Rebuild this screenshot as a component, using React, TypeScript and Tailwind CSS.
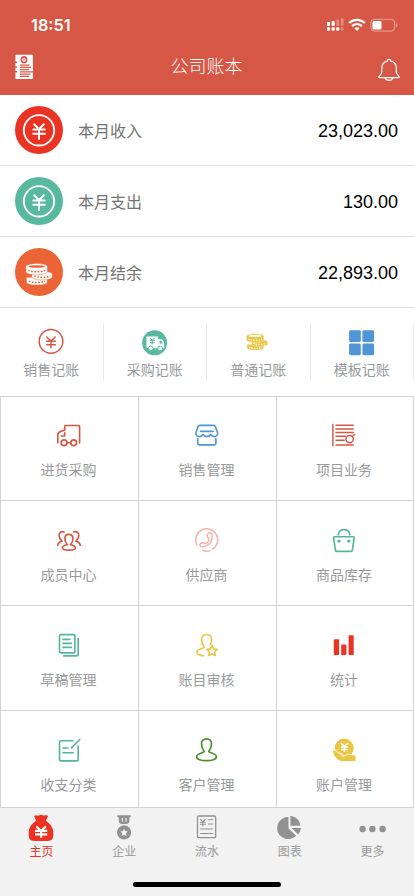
import type { ReactNode } from 'react';

const RED = '#d65745';
const GREEN = '#52b89a';
const GOLD = '#eac645';

function Stroke({ color, width = 1.65, children }: { color: string; width?: number; children: ReactNode }) {
  return (
    <svg width="28" height="28" viewBox="0 0 28 28" fill="none" stroke={color} strokeWidth={width} strokeLinecap="round" strokeLinejoin="round">
      {children}
    </svg>
  );
}

function CoinStack({ line, gap }: { line: string; gap: string }) {
  return (
    <>
      <g fill={line} stroke={gap} strokeWidth="0.5">
        <path d="M1.5 16v5.2c0 1.8 4.8 3.1 10.6 3.1s10.6-1.3 10.6-3.1V16z" />
        <path d="M7 10.5v5.3c0 1.8 4.7 3.1 10.4 3.1s10.4-1.3 10.4-3.1v-3c0-1.4-2-2.300-5-2.300z" />
        <path d="M.9 5v5.3c0 1.8 4.9 3.2 11 3.2s11-1.4 11-3.2V5c0-2-4.9-3.4-11-3.4S.9 3 .9 5z" />
      </g>
      <ellipse cx="11.9" cy="4.7" rx="8.4" ry="1.4" fill={gap} />
      <g fill="none" stroke={gap} strokeWidth="1.5" strokeDasharray="1.8 1.4">
        <path d="M3.3 8.700c4 2.200 13 2.200 17.400.1" />
        <path d="M9.500 14.700c4 2 12 2 16.200-.1" />
        <path d="M4 20.100c4 2 12 2 16.400 0" />
      </g>
    </>
  );
}

function YenBadge({ bg }: { bg: string }) {
  return (
    <svg width="48" height="48" viewBox="0 0 48 48" fill="none" stroke="#fff" strokeLinecap="round" strokeLinejoin="round">
      <circle cx="24" cy="24" r="24" fill={bg} stroke="none" />
      <circle cx="24" cy="24.3" r="15.2" strokeWidth="1.9" />
      <path d="M19.200 18.200l4.800 5 4.800-5M18.300 23.500h11.500M18.300 27.700h11.500M24 23.500V33" strokeWidth="2" />
    </svg>
  );
}

function CoinBadge() {
  return (
    <svg width="48" height="48" viewBox="0 0 48 48">
      <circle cx="24" cy="24" r="24" fill="#eb6437" />
      <g transform="translate(10 14) scale(.98 .95)"><CoinStack line="#fff" gap="#eb6437" /></g>
    </svg>
  );
}

const summary = [
  { label: '本月收入', value: '23,023.00', icon: <YenBadge bg="#eb3323" /> },
  { label: '本月支出', value: '130.00', icon: <YenBadge bg="#58b99d" /> },
  { label: '本月结余', value: '22,893.00', icon: <CoinBadge /> },
];

const quick = [
  {
    label: '销售记账',
    icon: (
      <Stroke color={RED} width={1.5}>
        <circle cx="14" cy="13.4" r="11.8" />
        <path d="M9.8 9l4.2 4.100 4.200-4.100M9.600 13.300h8.800M9.600 16.700h8.800M14 13.300v6.500" />
      </Stroke>
    ),
  },
  {
    label: '采购记账',
    icon: (
      <svg width="28" height="28" viewBox="0 0 28 28">
        <circle cx="13.6" cy="14.8" r="12.5" fill="#58b99d" />
        <path d="M5.500 8.500h11.600v2.800h3.100c1.600 0 3 3 3 4.300v4.600H6.800c-1 0-1.400-.6-1.400-1.400z" fill="#fff" />
        <path d="M18.600 12.700h1.400c.8 0 1.600 1.800 1.600 2.700h-3z" fill="#58b99d" />
        <path d="M8.900 9.900l2.400 2.500 2.400-2.500M8.800 12.700h5M8.800 14.700h5M11.300 12.500v4" stroke="#58b99d" fill="none" />
        <g fill="#fff" stroke="#58b99d" strokeWidth="1"><circle cx="9.800" cy="20.400" r="2.300" /><circle cx="19.100" cy="20.400" r="2.300" /></g>
      </svg>
    ),
  },
  {
    label: '普通记账',
    icon: (
      <svg width="28" height="28" viewBox="0 0 28 28">
        <g transform="translate(1.800 4.700) scale(.79 .72)"><CoinStack line={GOLD} gap="#fff" /></g>
      </svg>
    ),
  },
  {
    label: '模板记账',
    icon: (
      <svg width="28" height="28" viewBox="0 0 28 28" fill="#5096d6">
        <rect x="1.100" y="2.200" width="11.700" height="11.700" rx="1.400" />
        <rect x="14.400" y="2.200" width="11.700" height="11.700" rx="1.400" />
        <rect x="1.100" y="15.500" width="11.700" height="11.700" rx="1.400" />
        <rect x="14.400" y="15.500" width="11.700" height="11.700" rx="1.400" />
      </svg>
    ),
  },
];

const modules = [
  {
    label: '进货采购',
    icon: (
      <Stroke color={RED}>
        <path d="M24.600 21.800V5.600c0-.7-.4-1.100-1.100-1.100H10.800c-.7 0-1.100.4-1.100 1.100v3.500L6 10.300c-2 .7-3.200 1.600-3.200 3.600v7.900M9.700 11.700V15H6.300M12 21.700h3.700" />
        <circle cx="9" cy="21.700" r="2.900" />
        <circle cx="18.700" cy="21.700" r="2.900" />
      </Stroke>
    ),
  },
  {
    label: '销售管理',
    icon: (
      <Stroke color="#4f96d8">
        <path d="M7 4.400h13.500c1 0 1.600.3 1.900 1.200l2.200 6.200c.3 2-1.200 3.800-3.400 3.800-1.700 0-2.800-.7-3.600-2.200-.8 1.500-2 2.200-3.800 2.200s-3-.7-3.800-2.200c-.8 1.500-2 2.200-3.700 2.200-2.200 0-3.700-1.800-3.400-3.800l2.100-6.200c.4-.9 1-1.200 2-1.200zM7.500 10.300h12.600M4.700 17.700v4.800c0 .9.4 1.300 1.300 1.300h15.600c.9 0 1.300-.4 1.300-1.300v-4.800" />
      </Stroke>
    ),
  },
  {
    label: '项目业务',
    icon: (
      <Stroke color={RED} width={1.450}>
        <path d="M2.900 3.500v21.300M6 4.300h17.200M6 8h17.200M6 11.500h17.200M6 15.200h9.400M6 19.200h8.100M6 24h17.200M22.300 15.500l2.500-2.200" />
        <circle cx="19.600" cy="18.100" r="3.700" />
      </Stroke>
    ),
  },
  {
    label: '成员中心',
    icon: (
      <Stroke color={RED}>
        <path d="M13.900 8.400c-2.600 0-4 1.800-4 4.200 0 2.300.6 4.400 2.300 6.100-2.400.4-4.800 1.300-4.800 3 0 1.600 3 2.400 6.500 2.400s6.500-.8 6.500-2.400c0-1.700-2.400-2.600-4.800-3 1.700-1.700 2.300-3.800 2.300-6.100 0-2.400-1.400-4.200-4-4.200z" />
        <path d="M9.100 6C6.300 4.800 4 6.600 4.100 9.600c.1 2.500 1.200 4.200 2.900 5.500-2.600.8-4 2-4.300 4.200M18.800 6c2.800-1.200 5.100.6 5 3.600-.1 2.500-1.200 4.200-2.900 5.500 2.600.8 4 2 4.300 4.200" />
      </Stroke>
    ),
  },
  {
    label: '供应商',
    icon: (
      <Stroke color="#f0b4aa" width={1.500}>
        <path d="M3.900 18.800A11 11 0 1 1 19.500 23.200M9.800 24.300c2.400 1 5 1.100 7.400.3" />
        <path d="M14.400 8.500c1.800-2.600 4.700-2 4.800 1.100.1 3.700-1.600 7.800-4.800 9.800-2.700 1.700-6.200 1.900-7.200.5-.9-1.200.4-3.200 2.300-3.100 1.400.1 1.900 1.100 3.100.7 1.700-.6 3-2.400 3.300-4.200.2-1.300-.9-1.700-1.500-2.400-.5-.8-.5-1.600 0-2.400z" />
      </Stroke>
    ),
  },
  {
    label: '商品库存',
    icon: (
      <Stroke color={GREEN}>
        <path d="M4.500 10.700h18.700c.7 0 1.100.4 1 1.100l-1.800 12.300c-.1.800-.5 1.200-1.300 1.200H6.700c-.8 0-1.200-.4-1.300-1.200L3.600 11.800c-.1-.7.2-1.100.9-1.100zM8.200 8.800C8.900 5.500 11.100 3.700 14 3.700s5.200 1.800 5.900 5.100" />
        <g fill={GREEN} stroke="none"><circle cx="9" cy="15.100" r="1.700" /><circle cx="18.800" cy="15.100" r="1.700" /></g>
      </Stroke>
    ),
  },
  {
    label: '草稿管理',
    icon: (
      <Stroke color={GREEN}>
        <rect x="4.500" y="3.600" width="15.400" height="18.200" rx="1.400" />
        <path d="M23.200 7.400v15.800c0 1.100-.6 1.700-1.700 1.700H8.800M8 8.400h6.800M8 12.400h8.400M8 16.400h8.400" />
      </Stroke>
    ),
  },
  {
    label: '账目审核',
    icon: (
      <Stroke color={GOLD}>
        <path d="M17.300 13.700c1.100-2 1.500-3.700 1.300-5.700-.3-3-2.100-4.500-5-4.500-3 0-5 1.700-5 4.900 0 2.900.8 5.400 2.700 7.600-.2 1.500-7.200 1.700-7.500 5.100-.2 2.500 3.100 3.600 6.600 3.700" />
        <path d="M19.100 14.700l1.500 3.200 3.600.5-2.600 2.500.6 3.600-3.100-1.700-3.200 1.700.6-3.600-2.600-2.500 3.600-.5z" />
      </Stroke>
    ),
  },
  {
    label: '统计',
    icon: (
      <svg width="28" height="28" viewBox="0 0 28 28" fill="#eb3323">
        <rect x="3.800" y="8.300" width="5.300" height="15.800" rx=".7" />
        <rect x="11.200" y="13.400" width="5.200" height="10.700" rx=".7" />
        <rect x="18.600" y="4.300" width="5.100" height="19.800" rx=".7" />
      </svg>
    ),
  },
  {
    label: '收支分类',
    icon: (
      <Stroke color={GREEN}>
        <path d="M18 4.700H6.200c-1.100 0-1.700.6-1.700 1.700v16.800c0 1.100.6 1.700 1.700 1.700h15.300c1.100 0 1.700-.6 1.700-1.700V10M24.800 3.500l-8.400 8.400M8 12h5.100M8 16.700h10.300" />
      </Stroke>
    ),
  },
  {
    label: '客户管理',
    icon: (
      <Stroke color="#4b8f2e">
        <path d="M13.500 2.800c-3.100 0-5 1.800-5 5 0 3 .8 5.300 2.700 7.600-.2 1.700-7.300 1.700-7.600 5.100-.2 3.100 4.700 4.100 9.900 4.100s10.100-1 9.900-4.100c-.3-3.400-7.400-3.400-7.600-5.100 1.900-2.300 2.700-4.600 2.700-7.600 0-3.200-1.900-5-5-5z" />
      </Stroke>
    ),
  },
  {
    label: '账户管理',
    icon: (
      <svg width="28" height="28" viewBox="0 0 28 28">
        <circle cx="14.200" cy="12.100" r="9.500" fill={GOLD} />
        <path d="M10.900 7l3.500 3.600L17.900 7M11.100 10.900h6.600M11.100 13.500h6.600M14.400 10.500v5.500" stroke="#fff" strokeWidth="1.600" fill="none" />
        <path d="M3.700 13.900c2.100.3 3.600 2.200 5.300 3.200 2.300.2 4.200 1.100 5.100 3.100 1.400-.5 2.500-2.400 4.700-2.100 2.400.7 4.100.9 7.200 1.100v6.400H11.300c-2.600 0-8.700-5.500-8.500-10 0-.8.200-1.800.9-1.700z" fill={GOLD} stroke="#fff" strokeWidth=".9" />
        <path d="M9 17.200c1.300 1.700 2.400 2.900 4.700 3.300" stroke="#fff" strokeWidth=".8" fill="none" />
      </svg>
    ),
  },
];

const tabs = [
  {
    label: '主页',
    icon: (
      <svg width="28" height="28" viewBox="0 0 28 28">
        <path d="M8 1.600c2-.5 3 .3 4.200-.2 1.200-.8 2.500-.8 3.700 0 1.200.4 2.300-.4 4.400.2.7.3.7.9.4 1.500l-1.400 2.700c-.3.6-.2 1 .3 1.400 4.300 3 6.800 7.100 6.800 12.600 0 5.100-1.400 7.200-6 7.200H7.600c-4.600 0-6-2.100-6-7.200C1.600 14.300 4.100 10.200 8.400 7.200c.5-.4.6-.8.3-1.400L7.500 3.100c-.3-.6-.2-1.200.5-1.500z" fill="#eb3323" />
        <path d="M9.400 12.500l4.700 4.500 4.700-4.500M8 16.900h12.200M8 20.400h12.200M14.100 16.500v7.300" fill="none" stroke="#fff" strokeWidth="2.200" />
      </svg>
    ),
  },
  {
    label: '企业',
    icon: (
      <svg width="28" height="28" viewBox="0 0 28 28" fill="#929292">
        <path d="M7.300 1.200h13.500v1.600l-1.400 1v3.400c0 1.900-1.800 2.900-5.400 2.900s-5.200-1-5.200-2.900V3.800l-1.500-1z" />
        <path d="M12.300 4v3.400M16 4v3.400" stroke="#f2f2f2" strokeWidth="1.100" />
        <circle cx="14.100" cy="18.400" r="7.100" />
        <path d="M14.100 14.800l1.100 2.300 2.600.4-1.900 1.800.5 2.600-2.300-1.200-2.300 1.200.5-2.600-1.900-1.800 2.600-.4z" fill="#f2f2f2" />
      </svg>
    ),
  },
  {
    label: '流水',
    icon: (
      <Stroke color="#929292" width={1.300}>
        <rect x="4.500" y="2" width="18.200" height="21.700" rx="1" />
        <path d="M7.600 5.300l2.300 2.600 2.300-2.600M7.400 8.200h5M7.400 10.200h5M9.900 8v4M15.500 5.700h4.200M15.500 10h4.200M7.600 15h12.100M7.600 19.500h12.100" strokeWidth="1.100" />
      </Stroke>
    ),
  },
  {
    label: '图表',
    icon: (
      <svg width="28" height="28" viewBox="0 0 28 28" fill="#929292">
        <path d="M12.500 3.100v11.500l7.600 7.100A11 11 0 1 1 12.500 3.100z" />
        <path d="M14.400 1.900c5.500.4 9.600 4.400 10 9.900h-10zM15.600 14h9.200c-.1 2.500-1 4.800-2.600 6.500z" />
      </svg>
    ),
  },
  {
    label: '更多',
    icon: (
      <svg width="28" height="28" viewBox="0 0 28 28" fill="#929292">
        <circle cx="3.600" cy="15" r="3.200" /><circle cx="13.400" cy="15" r="3.200" /><circle cx="23.600" cy="15" r="3.200" />
      </svg>
    ),
  },
];

function StatusIcons() {
  return (
    <svg width="72" height="16" viewBox="0 0 72 16" fill="#fff">
      <rect x="-.2" y="5" width="3.200" height="4" rx="1" /><rect x="4.600" y="4" width="3.200" height="5" rx="1" />
      <rect x="9.300" y="2.500" width="2.800" height="6.500" rx="1" opacity=".3" /><rect x="13.800" y="1" width="2.800" height="8" rx="1" opacity=".3" />
      <rect x="-.2" y="10.300" width="3.200" height="3.500" rx="1" /><rect x="4.600" y="10.300" width="3.200" height="3.500" rx="1" /><rect x="9.200" y="10.300" width="3.200" height="3.500" rx="1" />
      <rect x="13.800" y="10.300" width="2.800" height="3.500" rx="1" opacity=".3" />
      <g fill="none" stroke="#fff" strokeWidth="2.300"><path d="M22.200 6c4.300-4.300 11.300-4.300 15.600 0M25.200 9.100c2.800-2.600 6.800-2.600 9.600 0" /></g>
      <path d="M27.400 11.200c1.500-1.300 3.700-1.300 5.200 0l-2.600 2.700z" />
      <rect x="43.900" y="2.300" width="23.700" height="11.800" rx="3.300" fill="none" stroke="#fff" strokeOpacity=".45" />
      <rect x="45.500" y="4" width="9" height="8.400" rx="1.500" />
      <path d="M69 6v4.400c1.700-.7 1.700-3.700 0-4.400z" opacity=".5" />
    </svg>
  );
}

function BookIcon() {
  return (
    <svg width="20" height="26" viewBox="0 0 20 26">
      <rect x="1.400" y=".7" width="17.500" height="24.300" rx=".8" fill="#fff" />
      <ellipse cx="10" cy="5.800" rx="2.600" ry="2.900" fill="#fff" stroke={RED} strokeWidth="1.600" />
      <path d="M8.900 4.200l1.100 1.400 1.100-1.400M10 5.600v2" stroke={RED} strokeWidth=".7" fill="none" />
      <path d="M6 11h9.500M6 13.300h11M6 15.600h9M6 17.900h13M6 20.200h10.500M6 22.400h9" stroke={RED} strokeWidth="1.250" />
      <path d="M0 8.300h3M0 13h3M0 17.800h3" stroke={RED} strokeWidth="1.500" />
    </svg>
  );
}

function BellIcon() {
  return (
    <svg width="24" height="24" viewBox="0 0 24 24" fill="none" stroke="#fff" strokeWidth="1.200" strokeLinejoin="round" strokeLinecap="round">
      <path d="M10.300 3.200c0-2.400 3.500-2.400 3.500 0 3.500.8 5.500 3.500 5.500 7v3.600c0 2.300 1 3.100 2.500 4.400.7.700.5 1.400-.4 1.400H2.700c-.9 0-1.100-.7-.4-1.400 1.500-1.300 2.500-2.100 2.500-4.400v-3.600c0-3.500 2-6.200 5.500-7zM8.200 19.800c.8 3.400 6.900 3.400 7.700 0" />
    </svg>
  );
}

export default function App() {
  return (
    <div className="flex h-[896px] w-[414px] flex-col overflow-hidden bg-white font-['Liberation_Sans','Noto_Sans_CJK_SC',sans-serif]">
      <header className="h-[95px] shrink-0 bg-[#d65745] text-white">
        <div className="flex h-[46px] items-start justify-between pt-[17px] pr-[15px] pl-[31px]">
          <span className="font-['Inter',sans-serif] text-[16.300px] leading-[17px] font-semibold">18:51</span>
          <StatusIcons />
        </div>
        <div className="flex h-[42px] items-center justify-between pr-[13px] pl-[14px]">
          <span className="flex w-[22px]"><BookIcon /></span>
          <h1 className="text-[18px] leading-6 font-light">公司账本</h1>
          <span className="pt-[5px]"><BellIcon /></span>
        </div>
      </header>

      <section className="shrink-0">
        {summary.map((row) => (
          <div key={row.label} className="flex h-[71px] items-center border-b border-[#dedede] pr-4 pl-[15px]">
            {row.icon}
            <span className="ml-[15px] pt-1 text-base text-[#747474]">{row.label}</span>
            <span className="ml-auto pt-[3px] text-[18px] text-black">{row.value}</span>
          </div>
        ))}
      </section>

      <section className="flex h-[88px] shrink-0 py-[15px]">
        {quick.map((item) => (
          <div key={item.label} className="flex h-[58px] w-[103.500px] flex-col items-center border-r border-[#e9e9e9] pt-[5px]">
            {item.icon}
            <span className="mt-[4px] text-sm leading-5 text-[#999a9e]">{item.label}</span>
          </div>
        ))}
      </section>

      <section className="grid h-[412px] shrink-0 grid-cols-[138px_138px_137px] grid-rows-[104px_105px_105px_97px] overflow-hidden border-t border-l border-[#d2d2d6]">
        {modules.map((item, i) => (
          <div key={item.label} className={`flex flex-col items-center border-r border-b border-[#d2d2d6] pr-0.5 ${i < 3 ? 'pt-6' : 'pt-[25px]'}`}>
            {item.icon}
            <span className="mt-[11px] text-sm leading-5 text-[#999a9e]">{item.label}</span>
          </div>
        ))}
      </section>

      <nav className="flex grow flex-col items-center bg-[#f2f2f2]">
        <div className="flex w-full">
          {tabs.map((tab, i) => (
            <div key={tab.label} className={`flex flex-1 flex-col items-center pt-1.5 text-xs leading-4 ${i === 0 ? 'text-[#eb3323]' : 'text-[#999]'}`}>
              {tab.icon}
              <span className="mt-[2px]">{tab.label}</span>
            </div>
          ))}
        </div>
        <div className="mt-[22px] h-[5px] w-[148px] rounded-full bg-black" />
      </nav>
    </div>
  );
}
